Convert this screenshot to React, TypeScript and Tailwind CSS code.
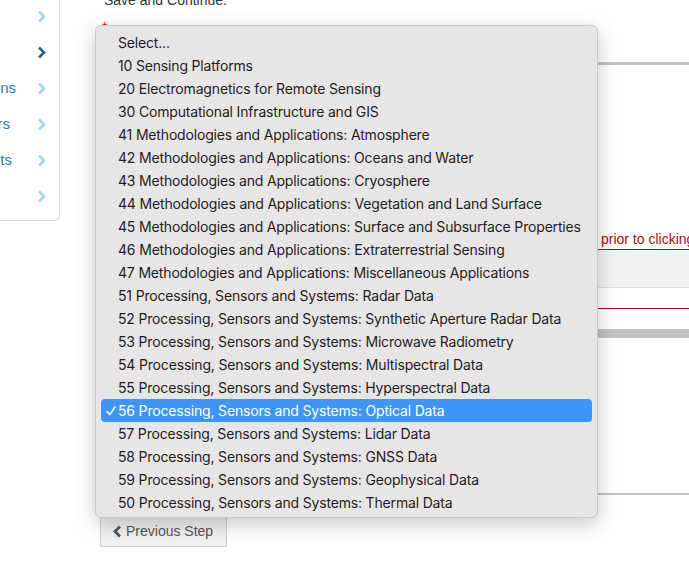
import React from "react";

const items = [
  "Select...",
  "10 Sensing Platforms",
  "20 Electromagnetics for Remote Sensing",
  "30 Computational Infrastructure and GIS",
  "41 Methodologies and Applications: Atmosphere",
  "42 Methodologies and Applications: Oceans and Water",
  "43 Methodologies and Applications: Cryosphere",
  "44 Methodologies and Applications: Vegetation and Land Surface",
  "45 Methodologies and Applications: Surface and Subsurface Properties",
  "46 Methodologies and Applications: Extraterrestrial Sensing",
  "47 Methodologies and Applications: Miscellaneous Applications",
  "51 Processing, Sensors and Systems: Radar Data",
  "52 Processing, Sensors and Systems: Synthetic Aperture Radar Data",
  "53 Processing, Sensors and Systems: Microwave Radiometry",
  "54 Processing, Sensors and Systems: Multispectral Data",
  "55 Processing, Sensors and Systems: Hyperspectral Data",
  "56 Processing, Sensors and Systems: Optical Data",
  "57 Processing, Sensors and Systems: Lidar Data",
  "58 Processing, Sensors and Systems: GNSS Data",
  "59 Processing, Sensors and Systems: Geophysical Data",
  "50 Processing, Sensors and Systems: Thermal Data",
];

function ChevronRight({ color }: { color: string }) {
  return (
    <svg width="9" height="13" viewBox="0 0 9 13" fill="none">
      <path d="M2 1.5 L7 6.5 L2 11.5" stroke={color} strokeWidth="2.6" strokeLinejoin="miter" />
    </svg>
  );
}

const sideRows = [
  { label: "Project Information", w: 0, dark: false },
  { label: "Classification", w: 0, dark: true },
  { label: "Keywords & Classifications", w: 16, dark: false },
  { label: "Co-Authors", w: 10, dark: false },
  { label: "Attachments", w: 12, dark: false },
  { label: "Review", w: 0, dark: false },
];

export default function App() {
  return (
    <div className="relative w-[689px] h-[574px] overflow-hidden bg-white" style={{ fontFamily: "'Liberation Sans', Arial, sans-serif" }}>
      <div className="flex items-start">
        {/* Sidebar */}
        <div className="w-[60px] shrink-0 mt-[-2px] pb-[6px] border-r border-b border-[#dcdcdc] rounded-br-[6px]">
          {sideRows.map((r, i) => (
            <div key={i} className="flex items-center h-[36px] pr-[13px]">
              <div className="flex justify-end overflow-hidden" style={{ width: r.w }}>
                <span className="whitespace-nowrap text-[15px] text-[#1a7dbf]">{r.label}</span>
              </div>
              <div className="ml-auto flex items-center">
                <ChevronRight color={r.dark ? "#2f6287" : "#a9d4ee"} />
              </div>
            </div>
          ))}
        </div>

        {/* Main */}
        <div className="flex-1 pl-[40px] flex flex-col">
          <div className="mt-[-10px] h-[20px] pl-[4px] text-[14px] text-[#333] whitespace-nowrap">Save and Continue.</div>
          <div className="mt-[12px] h-[10px] pl-[2px] text-[14px] leading-[10px] text-[#e00]">*</div>
          <div className="mt-[30px] h-[3px] bg-[#c2c2c2]" />
          <div className="mt-[166px] pl-[501px] h-[18px] whitespace-nowrap text-[14px] leading-[16px] text-[#a50e18]">
            prior to clicking Save and Continue.
          </div>
          <div className="h-[1px] bg-[#a50e18]" />
          <div className="h-[38px] bg-[#f2f2f2] border-b border-[#dddddd]" />
          <div className="mt-[20px] h-[1px] bg-[#a50e18]" />
          <div className="mt-[20px] h-[9px] bg-[#c2c2c2]" />
          <div className="mt-[155px] h-[2px] bg-[#c2c2c2]" />
          <div className="mt-[20px]">
            <button className="flex items-center gap-[4px] h-[32px] w-[127px] pl-[12px] bg-[#f0f0f0] border border-[#cccccc] text-[14px] text-[#555]">
              <svg width="9" height="13" viewBox="0 0 9 13" fill="none">
                <path d="M7 1.5 L2 6.5 L7 11.5" stroke="#555" strokeWidth="2.8" />
              </svg>
              Previous Step
            </button>
          </div>
        </div>
      </div>

      {/* Dropdown menu overlay */}
      <div
        className="absolute left-[95px] top-[25px] w-[503px] h-[493px] rounded-[6px] bg-[#e8e5e7] border border-[#c9c6c8] shadow-[0_6px_20px_rgba(0,0,0,0.22)] pt-[5px] pl-[5px] pr-[5px]"
        style={{ fontFamily: "Inter, 'Noto Sans', sans-serif" }}
      >
        {items.map((t, i) => {
          const sel = i === 16;
          return (
            <div
              key={i}
              className={
                sel
                  ? "flex items-center h-[23px] rounded-[4px] bg-[#3e95f6] text-white text-[14px] tracking-[-0.17px] whitespace-nowrap"
                  : "flex items-center h-[23px] text-[#1e1e1e] text-[14px] tracking-[-0.17px] whitespace-nowrap"
              }
            >
              <div className="w-[17px] flex justify-center pl-[2px]">
                {sel && (
                  <svg width="10" height="10" viewBox="0 0 10 10" fill="none">
                    <path d="M1 5.5 L3.8 8.5 L9 1" stroke="white" strokeWidth="1.6" strokeLinecap="round" strokeLinejoin="round" />
                  </svg>
                )}
              </div>
              <span>{t}</span>
            </div>
          );
        })}
      </div>
    </div>
  );
}
